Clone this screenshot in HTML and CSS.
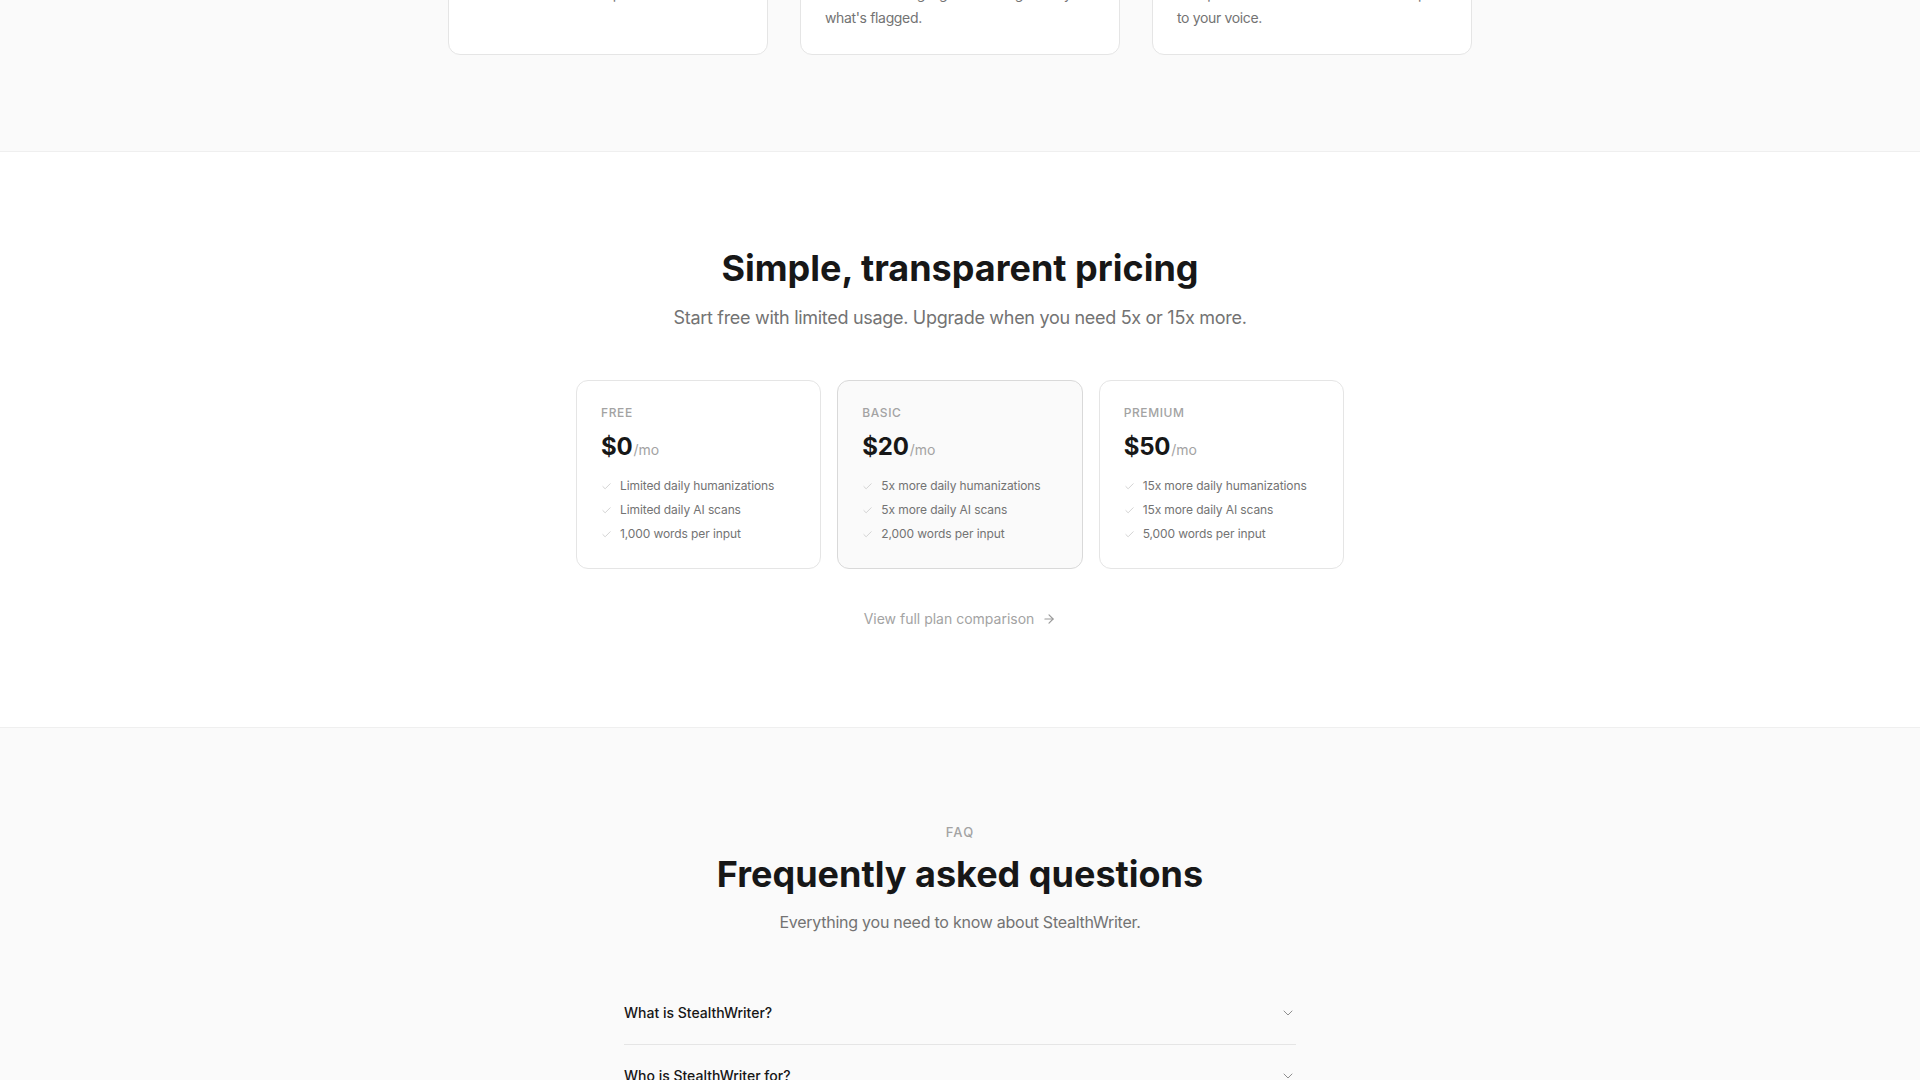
FILE: index.html
```html
<!DOCTYPE html>
<html lang="en">
<head>
<meta charset="utf-8">
<title>StealthWriter</title>
<link rel="stylesheet" href="styles.css">
</head>
<body>
<section class="features">
  <div class="feature-grid">
    <div class="feature-card">
      <div class="feature-icon"></div>
      <h3 class="feature-title">Lightning fast</h3>
      <p class="feature-text">Humanize thousands of words in seconds,<br>not minutes. Built for speed at scale.</p>
    </div>
    <div class="feature-card">
      <div class="feature-icon"></div>
      <h3 class="feature-title">Detailed AI detection</h3>
      <p class="feature-text">Get a sentence-level breakdown with<br>color-coded highlights showing exactly<br>what's flagged.</p>
    </div>
    <div class="feature-card">
      <div class="feature-icon"></div>
      <h3 class="feature-title">Multiple rewrites</h3>
      <p class="feature-text">Every humanization comes with<br>multiple alternatives. Fine-tune the output<br>to your voice.</p>
    </div>
  </div>
</section>

<section class="pricing">
  <h2 class="section-title">Simple, transparent pricing</h2>
  <p class="section-sub">Start free with limited usage. Upgrade when you need 5x or 15x more.</p>
  <div class="plans">
    <div class="plan">
      <div class="plan-name">FREE</div>
      <div class="plan-price"><span class="amount">$0</span><span class="per">/mo</span></div>
      <ul class="plan-list">
        <li><svg class="check" viewBox="0 0 24 24"><path d="M20 6 9 17l-5-5"/></svg>Limited daily humanizations</li>
        <li><svg class="check" viewBox="0 0 24 24"><path d="M20 6 9 17l-5-5"/></svg>Limited daily AI scans</li>
        <li><svg class="check" viewBox="0 0 24 24"><path d="M20 6 9 17l-5-5"/></svg>1,000 words per input</li>
      </ul>
    </div>
    <div class="plan plan-featured">
      <div class="plan-name">BASIC</div>
      <div class="plan-price"><span class="amount">$20</span><span class="per">/mo</span></div>
      <ul class="plan-list">
        <li><svg class="check" viewBox="0 0 24 24"><path d="M20 6 9 17l-5-5"/></svg>5x more daily humanizations</li>
        <li><svg class="check" viewBox="0 0 24 24"><path d="M20 6 9 17l-5-5"/></svg>5x more daily AI scans</li>
        <li><svg class="check" viewBox="0 0 24 24"><path d="M20 6 9 17l-5-5"/></svg>2,000 words per input</li>
      </ul>
    </div>
    <div class="plan">
      <div class="plan-name">PREMIUM</div>
      <div class="plan-price"><span class="amount">$50</span><span class="per">/mo</span></div>
      <ul class="plan-list">
        <li><svg class="check" viewBox="0 0 24 24"><path d="M20 6 9 17l-5-5"/></svg>15x more daily humanizations</li>
        <li><svg class="check" viewBox="0 0 24 24"><path d="M20 6 9 17l-5-5"/></svg>15x more daily AI scans</li>
        <li><svg class="check" viewBox="0 0 24 24"><path d="M20 6 9 17l-5-5"/></svg>5,000 words per input</li>
      </ul>
    </div>
  </div>
  <a class="compare-link" href="#">View full plan comparison <svg class="arrow" viewBox="0 0 24 24"><path d="M5 12h14"/><path d="m12 5 7 7-7 7"/></svg></a>
</section>

<section class="faq">
  <div class="eyebrow">FAQ</div>
  <h2 class="section-title faq-title">Frequently asked questions</h2>
  <p class="section-sub faq-sub">Everything you need to know about StealthWriter.</p>
  <div class="faq-list">
    <div class="faq-item">
      <span class="faq-q">What is StealthWriter?</span>
      <svg class="chev" viewBox="0 0 24 24"><path d="m6 9 6 6 6-6"/></svg>
    </div>
    <div class="faq-item">
      <span class="faq-q">Who is StealthWriter for?</span>
      <svg class="chev" viewBox="0 0 24 24"><path d="m6 9 6 6 6-6"/></svg>
    </div>
    <div class="faq-item">
      <span class="faq-q">Is StealthWriter free to use?</span>
      <svg class="chev" viewBox="0 0 24 24"><path d="m6 9 6 6 6-6"/></svg>
    </div>
  </div>
</section>
</body>
</html>
```
FILE: styles.css
```css
* { box-sizing: border-box; }
html, body { margin: 0; padding: 0; }
body {
  font-family: Inter, "Noto Sans", "Liberation Sans", sans-serif;
  color: #171717;
  background: #ffffff;
  -webkit-font-smoothing: antialiased;
}

/* Features (top, partially visible) */
.features {
  background: #fafafa;
  border-bottom: 1px solid #efefef;
  padding: 0 0 96px;
}
.feature-grid {
  width: 1024px;
  margin: -159px auto 0;
  display: grid;
  grid-template-columns: repeat(3, 1fr);
  gap: 32px;
}
.feature-card {
  background: #ffffff;
  border: 1px solid #e5e5e5;
  border-radius: 12px;
  padding: 24px;
}
.feature-icon {
  width: 40px;
  height: 40px;
  border-radius: 8px;
  background: #f5f5f5;
  margin-bottom: 16px;
}
.feature-title {
  margin: 0 0 8px;
  font-size: 17px;
  line-height: 28px;
  font-weight: 600;
}
.feature-text {
  margin: 0;
  font-size: 14px;
  line-height: 24px;
  letter-spacing: -0.35px;
  white-space: nowrap;
  color: #737373;
}

/* Pricing */
.pricing {
  padding: 96px 0 98px;
  border-bottom: 1px solid #efefef;
  display: flex;
  flex-direction: column;
  align-items: center;
}
.section-title {
  margin: 0;
  font-size: 36px;
  line-height: 40px;
  font-weight: 700;
  letter-spacing: 0;
  color: #171717;
}
.section-sub {
  margin: 16px 0 0;
  font-size: 18px;
  line-height: 28px;
  letter-spacing: -0.3px;
  color: #737373;
}
.plans {
  margin-top: 48px;
  width: 768px;
  display: grid;
  grid-template-columns: repeat(3, 1fr);
  gap: 16px;
}
.plan {
  border: 1px solid #e5e5e5;
  border-radius: 12px;
  padding: 24px;
  background: #ffffff;
}
.plan-featured {
  background: #fafafa;
  border-color: #d9d9d9;
}
.plan-name {
  font-size: 12px;
  line-height: 16px;
  font-weight: 500;
  letter-spacing: 0.05em;
  color: #a3a3a3;
}
.plan-price {
  margin-top: 10px;
  display: flex;
  align-items: baseline;
  line-height: 32px;
}
.amount {
  font-size: 24px;
  font-weight: 700;
  letter-spacing: -0.01em;
  color: #171717;
}
.per {
  font-size: 14px;
  color: #a3a3a3;
  margin-left: 1px;
}
.plan-list {
  list-style: none;
  margin: 10px 0 0;
  padding: 0;
  display: flex;
  flex-direction: column;
  gap: 4px;
}
.plan-list li {
  display: flex;
  align-items: center;
  gap: 8px;
  font-size: 12px;
  line-height: 20px;
  letter-spacing: -0.1px;
  white-space: nowrap;
  color: #737373;
}
.check {
  width: 11px;
  height: 11px;
  fill: none;
  stroke: #cfcfcf;
  stroke-width: 2;
  stroke-linecap: round;
  stroke-linejoin: round;
  flex-shrink: 0;
}
.compare-link {
  margin-top: 40px;
  display: inline-flex;
  align-items: center;
  gap: 8px;
  font-size: 14px;
  line-height: 20px;
  color: #a3a3a3;
  text-decoration: none;
}
.arrow {
  width: 14px;
  height: 14px;
  fill: none;
  stroke: #9a9a9a;
  stroke-width: 2;
  stroke-linecap: round;
  stroke-linejoin: round;
}

/* FAQ */
.faq {
  background: #fafafa;
  padding: 96px 0 96px;
  display: flex;
  flex-direction: column;
  align-items: center;
}
.eyebrow {
  font-size: 13px;
  line-height: 16px;
  font-weight: 500;
  letter-spacing: 0.08em;
  color: #a3a3a3;
}
.faq-title {
  margin-top: 14px;
}
.faq-sub {
  font-size: 16px;
  line-height: 24px;
  letter-spacing: -0.25px;
}
.faq-list {
  margin-top: 48px;
  width: 672px;
}
.faq-item {
  display: flex;
  align-items: center;
  justify-content: space-between;
  padding: 20px 0;
  border-bottom: 1px solid #e5e5e5;
}
.faq-q {
  font-size: 14px;
  line-height: 22px;
  font-weight: 500;
  color: #171717;
}
.chev {
  width: 16px;
  height: 16px;
  fill: none;
  stroke: #8f8f8f;
  stroke-width: 1.5;
  stroke-linecap: round;
  stroke-linejoin: round;
}
```
